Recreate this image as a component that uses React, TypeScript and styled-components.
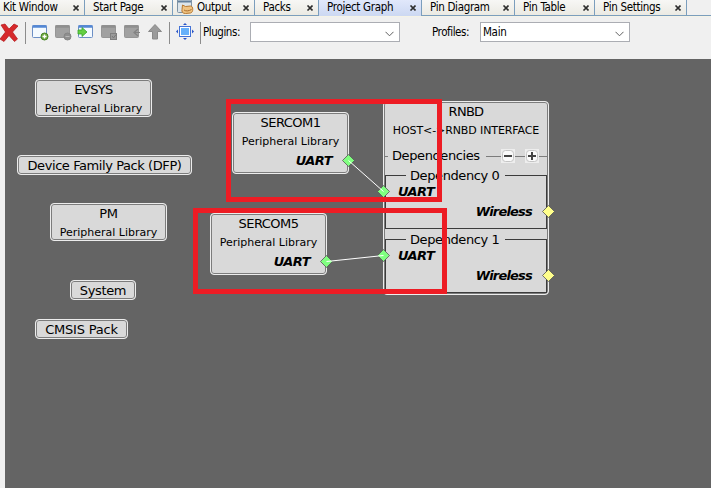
import React from "react";
import styled, { createGlobalStyle } from "styled-components";

const Global = createGlobalStyle`
  * { box-sizing: border-box; }
  body { margin: 0; overflow: hidden; background: #f0f0f0; }
`;

const Window = styled.div`
  display: flex;
  flex-direction: column;
  width: 711px;
  height: 488px;
  overflow: hidden;
  background: #f0f0f0;
  color: #000;
  font-family: "DejaVu Sans Condensed", "DejaVu Sans", sans-serif;
  font-stretch: condensed;
  font-size: 11.5px;
  letter-spacing: -0.32px;
  white-space: nowrap;
`;

const TabBar = styled.div`
  display: flex;
  flex: none;
  height: 16px;
  border-bottom: 1px solid #7b9ebd;
  box-shadow: 0 1px 0 #f5f3e6;
`;

const Tab = styled.div<{ $w: number; $active?: boolean; $first?: boolean }>`
  display: flex;
  align-items: flex-start;
  width: ${(p) => p.$w}px;
  height: ${(p) => (p.$active ? 16 : 15)}px;
  padding: 0 5px 0 ${(p) => (p.$first ? 3 : 8)}px;
  border-right: 1px solid #7b9ebd;
  background: ${(p) =>
    p.$active ? "linear-gradient(#e1e8fb, #ccd8f2)" : "linear-gradient(#f7f7f5, #ebeae3)"};
`;

const Text = styled.span`
  line-height: 15px;
`;

const Close = styled.svg`
  display: block;
  flex: none;
  width: 7px;
  height: 6px;
  margin: 5px 0 0 auto;
`;

const TabIcon = styled.svg`
  display: block;
  flex: none;
  width: 17px;
  height: 15px;
  margin: 0 3px 0 -4px;
`;

const Toolbar = styled.div`
  display: flex;
  flex: none;
  align-items: flex-start;
  height: 43px;
  padding-top: 6px;
`;

const ToolIcon = styled.svg<{ $gap?: number }>`
  display: block;
  flex: none;
  width: 18px;
  height: 20px;
  margin-right: ${(p) => p.$gap ?? 5}px;
`;

const Divider = styled.div<{ $gap: number }>`
  flex: none;
  width: 1px;
  height: 22px;
  margin-right: ${(p) => p.$gap}px;
  background: #8c8c8c;
`;

const FieldLabel = styled.label<{ $w: number }>`
  flex: none;
  width: ${(p) => p.$w}px;
  line-height: 20px;
  letter-spacing: -0.45px;
`;

const Select = styled.div<{ $gap?: number }>`
  display: flex;
  flex: none;
  align-items: center;
  justify-content: space-between;
  width: 150px;
  height: 20px;
  margin-right: ${(p) => p.$gap ?? 0}px;
  padding: 0 5px 0 2px;
  border: 1px solid #abadb3;
  background: #fff;
`;

const Chevron = styled.svg`
  width: 9px;
  height: 6px;
  margin: 3px 0 0 auto;
`;

const Canvas = styled.div`
  position: relative;
  flex: 1;
  margin-left: 5px;
  background: #646464;
  font-family: "DejaVu Sans", sans-serif;
  font-stretch: normal;
  font-size: 13px;
  letter-spacing: 0;
`;

const Node = styled.div<{ $x: number; $y: number; $w: number; $h: number }>`
  position: absolute;
  left: ${(p) => p.$x}px;
  top: ${(p) => p.$y}px;
  display: flex;
  flex-direction: column;
  width: ${(p) => p.$w}px;
  height: ${(p) => p.$h}px;
  border: 1px solid #ececec;
  border-radius: 4px;
  box-shadow: inset 0 0 0 1px #7c7c7c;
  background: #d9d9d9;
`;

const Title = styled.div<{ $ls?: number }>`
  flex: none;
  height: 20px;
  line-height: 19px;
  text-align: center;
  letter-spacing: ${(p) => p.$ls ?? -0.4}px;
`;

const Subtitle = styled(Title)`
  height: 18px;
  line-height: 17px;
  font-size: 11px;
`;

const Port = styled.div<{ $end?: boolean; $pad: number; $ls?: number }>`
  flex: none;
  height: 20px;
  padding: 0 ${(p) => p.$pad}px;
  text-align: ${(p) => (p.$end ? "right" : "left")};
  font-weight: bold;
  font-style: italic;
  line-height: 20px;
  letter-spacing: ${(p) => p.$ls ?? -0.5}px;
`;

const SectionRow = styled.div`
  display: flex;
  align-items: center;
  height: 18px;
  margin-top: 7px;
`;

const Rule = styled.div<{ $w?: number; $dark?: boolean }>`
  flex: ${(p) => (p.$w ? "none" : "1")};
  width: ${(p) => (p.$w ? p.$w + "px" : "auto")};
  height: 1px;
  background: ${(p) => (p.$dark ? "#3c3c3c" : "#7c7c7c")};
`;

const SectionName = styled.span<{ $w: number; $pad: number }>`
  flex: none;
  width: ${(p) => p.$w}px;
  padding-left: ${(p) => p.$pad}px;
  line-height: 18px;
  letter-spacing: -0.4px;
`;

const RoundButton = styled.svg`
  display: block;
  flex: none;
  width: 14px;
  height: 14px;
`;

const GroupStack = styled.div`
  display: flex;
  flex-direction: column;
  gap: 10px;
  margin: 10px 1px 0;
`;

const Group = styled.div`
  height: 54px;
  border: 1px solid #3c3c3c;
  border-top: 0;
`;

const GroupHead = styled.div`
  display: flex;
  align-items: center;
  height: 1px;
  margin-bottom: 6px;
`;

const Wires = styled.svg`
  position: absolute;
  inset: 0;
  width: 100%;
  height: 100%;
`;

const Highlight = styled.div<{ $x: number; $y: number; $w: number; $h: number }>`
  position: absolute;
  left: ${(p) => p.$x}px;
  top: ${(p) => p.$y}px;
  width: ${(p) => p.$w}px;
  height: ${(p) => p.$h}px;
  border: 5px solid #ed1c24;
`;

const tabs = [
  { name: "Kit Window", w: 85 },
  { name: "Start Page", w: 88 },
  { name: "Output", w: 82, icon: true },
  { name: "Packs", w: 64 },
  { name: "Project Graph", w: 103, active: true },
  { name: "Pin Diagram", w: 93 },
  { name: "Pin Table", w: 80 },
  { name: "Pin Settings", w: 92 },
];

const modules = [
  { name: "EVSYS", ls: -0.6, sub: true, x: 30, y: 20, w: 117, h: 38 },
  { name: "Device Family Pack (DFP)", ls: -0.42, x: 12, y: 96, w: 175, h: 20 },
  { name: "PM", ls: -0.4, sub: true, x: 45, y: 144, w: 117, h: 38 },
  { name: "System", ls: -0.35, x: 65, y: 221, w: 66, h: 20 },
  { name: "CMSIS Pack", ls: -0.2, x: 30, y: 260, w: 93, h: 20 },
  { name: "SERCOM1", ls: -0.5, sub: true, port: true, x: 227, y: 53, w: 117, h: 62 },
  { name: "SERCOM5", ls: -0.5, sub: true, port: true, x: 205, y: 154, w: 117, h: 62 },
];

const ports = [
  { x: 343, y: 101, c: "#80ff80" },
  { x: 378, y: 132, c: "#80ff80" },
  { x: 321, y: 202, c: "#80ff80" },
  { x: 378, y: 196, c: "#80ff80" },
  { x: 543, y: 152, c: "#ffff8c" },
  { x: 543, y: 216, c: "#ffff8c" },
];

function CloseMark() {
  return (
    <Close viewBox="0 0 7 6">
      <path d="M1.500 .5L6.500 5.500M6.500 .5L1.500 5.500" stroke="#2d2d2d" strokeWidth="1.600" />
    </Close>
  );
}

function OutputIcon() {
  return (
    <TabIcon viewBox="0 0 17 15">
      <rect x=".5" y="-2" width="14" height="14.500" rx="1" fill="#dde5ea" stroke="#7e93a5" />
      <path d="M1 1.500h13" stroke="#63809c" strokeWidth="2" />
      <path d="M5.500 5l3 1.500 5-.5c3 0 3 6.500 0 7l-5 .5c-3 0-4-2-3.500-4z" fill="#efc382" stroke="#b77930" />
      <path d="M7 10c2 1.500 5 1 7.500-.5" fill="none" stroke="#a96d2b" />
    </TabIcon>
  );
}

function PanelIcon({ kind, disabled }: { kind: "add" | "remove" | "import" | "check" | "back"; disabled?: boolean }) {
  return (
    <ToolIcon viewBox="0 0 18 20">
      <rect x="1.500" y="3.500" width="14" height="12" rx="1" fill={disabled ? "#a1a1a1" : "#f4faff"} stroke={disabled ? "#969696" : "#6c8fc5"} />
      <path d="M1.500 4.500h14" stroke={disabled ? "#8f8f8f" : "#5387d5"} strokeWidth="2.500" />
      {kind === "add" && (
        <>
          <circle cx="13.500" cy="14.500" r="3.500" fill="#6faa45" stroke="#458322" />
          <path d="M11.500 14.500h4M13.500 12.500v4" stroke="#fff" strokeWidth="1.300" />
        </>
      )}
      {kind === "remove" && (
        <>
          <circle cx="13.500" cy="14.500" r="3.500" fill="#8f8f8f" stroke="#858585" />
          <path d="M11.500 14.500h4" stroke="#b8b8b8" />
        </>
      )}
      {kind === "import" && <path d="M1 8h4V5.500l5 4.500-5 4.500V12H1z" fill="#64cf43" stroke="#37a52a" strokeWidth=".8" />}
      {kind === "check" && (
        <>
          <rect x="10.500" y="11.500" width="6" height="6" fill="#9b9b9b" stroke="#808080" />
          <path d="M12 14l1.500 2 2.500-3.500" fill="none" stroke="#777" />
        </>
      )}
      {kind === "back" && <path d="M15 7l-4 3.500 4 3.500M12 10.500h5" fill="none" stroke="#838383" strokeWidth="1.200" />}
    </ToolIcon>
  );
}

function Dropdown({ value, gap }: { value?: string; gap?: number }) {
  return (
    <Select $gap={gap}>
      <Text>{value}</Text>
      <Chevron viewBox="0 0 9 6">
        <path d="M.5 .8l4 4 4-4" fill="none" stroke="#606060" />
      </Chevron>
    </Select>
  );
}

function SignButton({ plus }: { plus?: boolean }) {
  return (
    <RoundButton viewBox="0 0 14 14">
      <rect width="14" height="14" fill="#eee" />
      <rect x="1.500" y="1.500" width="11" height="11" rx="3" fill="#fafafa" stroke="#c4c4c4" />
      <path d={plus ? "M3 7h8M7 3v8" : "M3 7h8"} stroke="#444" strokeWidth="2" />
    </RoundButton>
  );
}

function Dependency({ index }: { index: number }) {
  return (
    <Group>
      <GroupHead>
        <Rule $w={20} $dark />
        <SectionName $w={99} $pad={4}>Dependency {index}</SectionName>
        <Rule $dark />
      </GroupHead>
      <Port $pad={12}>UART</Port>
      <Port $pad={14} $end $ls={-0.8}>Wireless</Port>
    </Group>
  );
}

export default function App() {
  return (
    <Window>
      <Global />
      <TabBar>
        {tabs.map((t, i) => (
          <Tab key={t.name} $w={t.w} $active={t.active} $first={i === 0}>
            {t.icon && <OutputIcon />}
            <Text>{t.name}</Text>
            <CloseMark />
          </Tab>
        ))}
      </TabBar>
      <Toolbar>
        <ToolIcon viewBox="0 0 18 20" $gap={7}>
          <path d="M1 3l4-1 4 5 5-5 4 2-5.500 6 5 7-3 2.500-5.500-6-5 6-4-2.500L5.500 10z" fill="#d6292b" stroke="#b01518" strokeWidth=".7" />
        </ToolIcon>
        <Divider $gap={5} />
        <PanelIcon kind="add" />
        <PanelIcon kind="remove" disabled />
        <PanelIcon kind="import" />
        <PanelIcon kind="check" disabled />
        <PanelIcon kind="back" disabled />
        <ToolIcon viewBox="0 0 18 20" $gap={5}>
          <path d="M9 2.500l6.500 7h-4v7.500h-5V9.500h-4z" fill="#9b9b9b" stroke="#8a8a8a" />
        </ToolIcon>
        <Divider $gap={6} />
        <ToolIcon viewBox="0 0 18 20" $gap={6}>
          <rect x="3.500" y="4.500" width="11" height="10" fill="#fff" stroke="#4472d6" />
          <rect x="5" y="6" width="8" height="7" fill="#67b1fa" />
          <path d="M9 1l2 2H7zM9 18l2-2H7zM0 9.500l2-2v4zM18 9.500l-2-2v4z" fill="#2855c8" />
        </ToolIcon>
        <Divider $gap={2} />
        <FieldLabel $w={47}>Plugins:</FieldLabel>
        <Dropdown gap={32} />
        <FieldLabel $w={48}>Profiles:</FieldLabel>
        <Dropdown value="Main" />
      </Toolbar>
      <Canvas>
        {modules.map((m) => (
          <Node key={m.name} $x={m.x} $y={m.y} $w={m.w} $h={m.h}>
            <Title $ls={m.ls}>{m.name}</Title>
            {m.sub && <Subtitle $ls={0}>Peripheral Library</Subtitle>}
            {m.port && <Port $pad={16} $end>UART</Port>}
          </Node>
        ))}
        <Node $x={378} $y={42} $w={166} $h={194}>
          <Title $ls={-0.7}>RNBD</Title>
          <Subtitle $ls={-0.1}>HOST&lt;-&gt;RNBD INTERFACE</Subtitle>
          <SectionRow>
            <Rule $w={4} />
            <SectionName $w={98} $pad={4}>Dependencies</SectionName>
            <Rule $w={15} />
            <SignButton />
            <Rule $w={10} />
            <SignButton plus />
            <Rule />
          </SectionRow>
          <GroupStack>
            <Dependency index={0} />
            <Dependency index={1} />
          </GroupStack>
        </Node>
        <Wires>
          {ports.map((p, i) => (
            <path key={i} d={`M${p.x + 0.5} ${p.y - 5.5}l6 6-6 6-6-6z`} fill={p.c} stroke="#555" strokeWidth=".8" />
          ))}
          <path d="M343.500 101.500L378.500 132.500M321.500 202.500L378.500 196.500" stroke="#fff" />
        </Wires>
        <Highlight $x={221} $y={40} $w={216} $h={103} />
        <Highlight $x={188} $y={149} $w={254} $h={86} />
      </Canvas>
    </Window>
  );
}
